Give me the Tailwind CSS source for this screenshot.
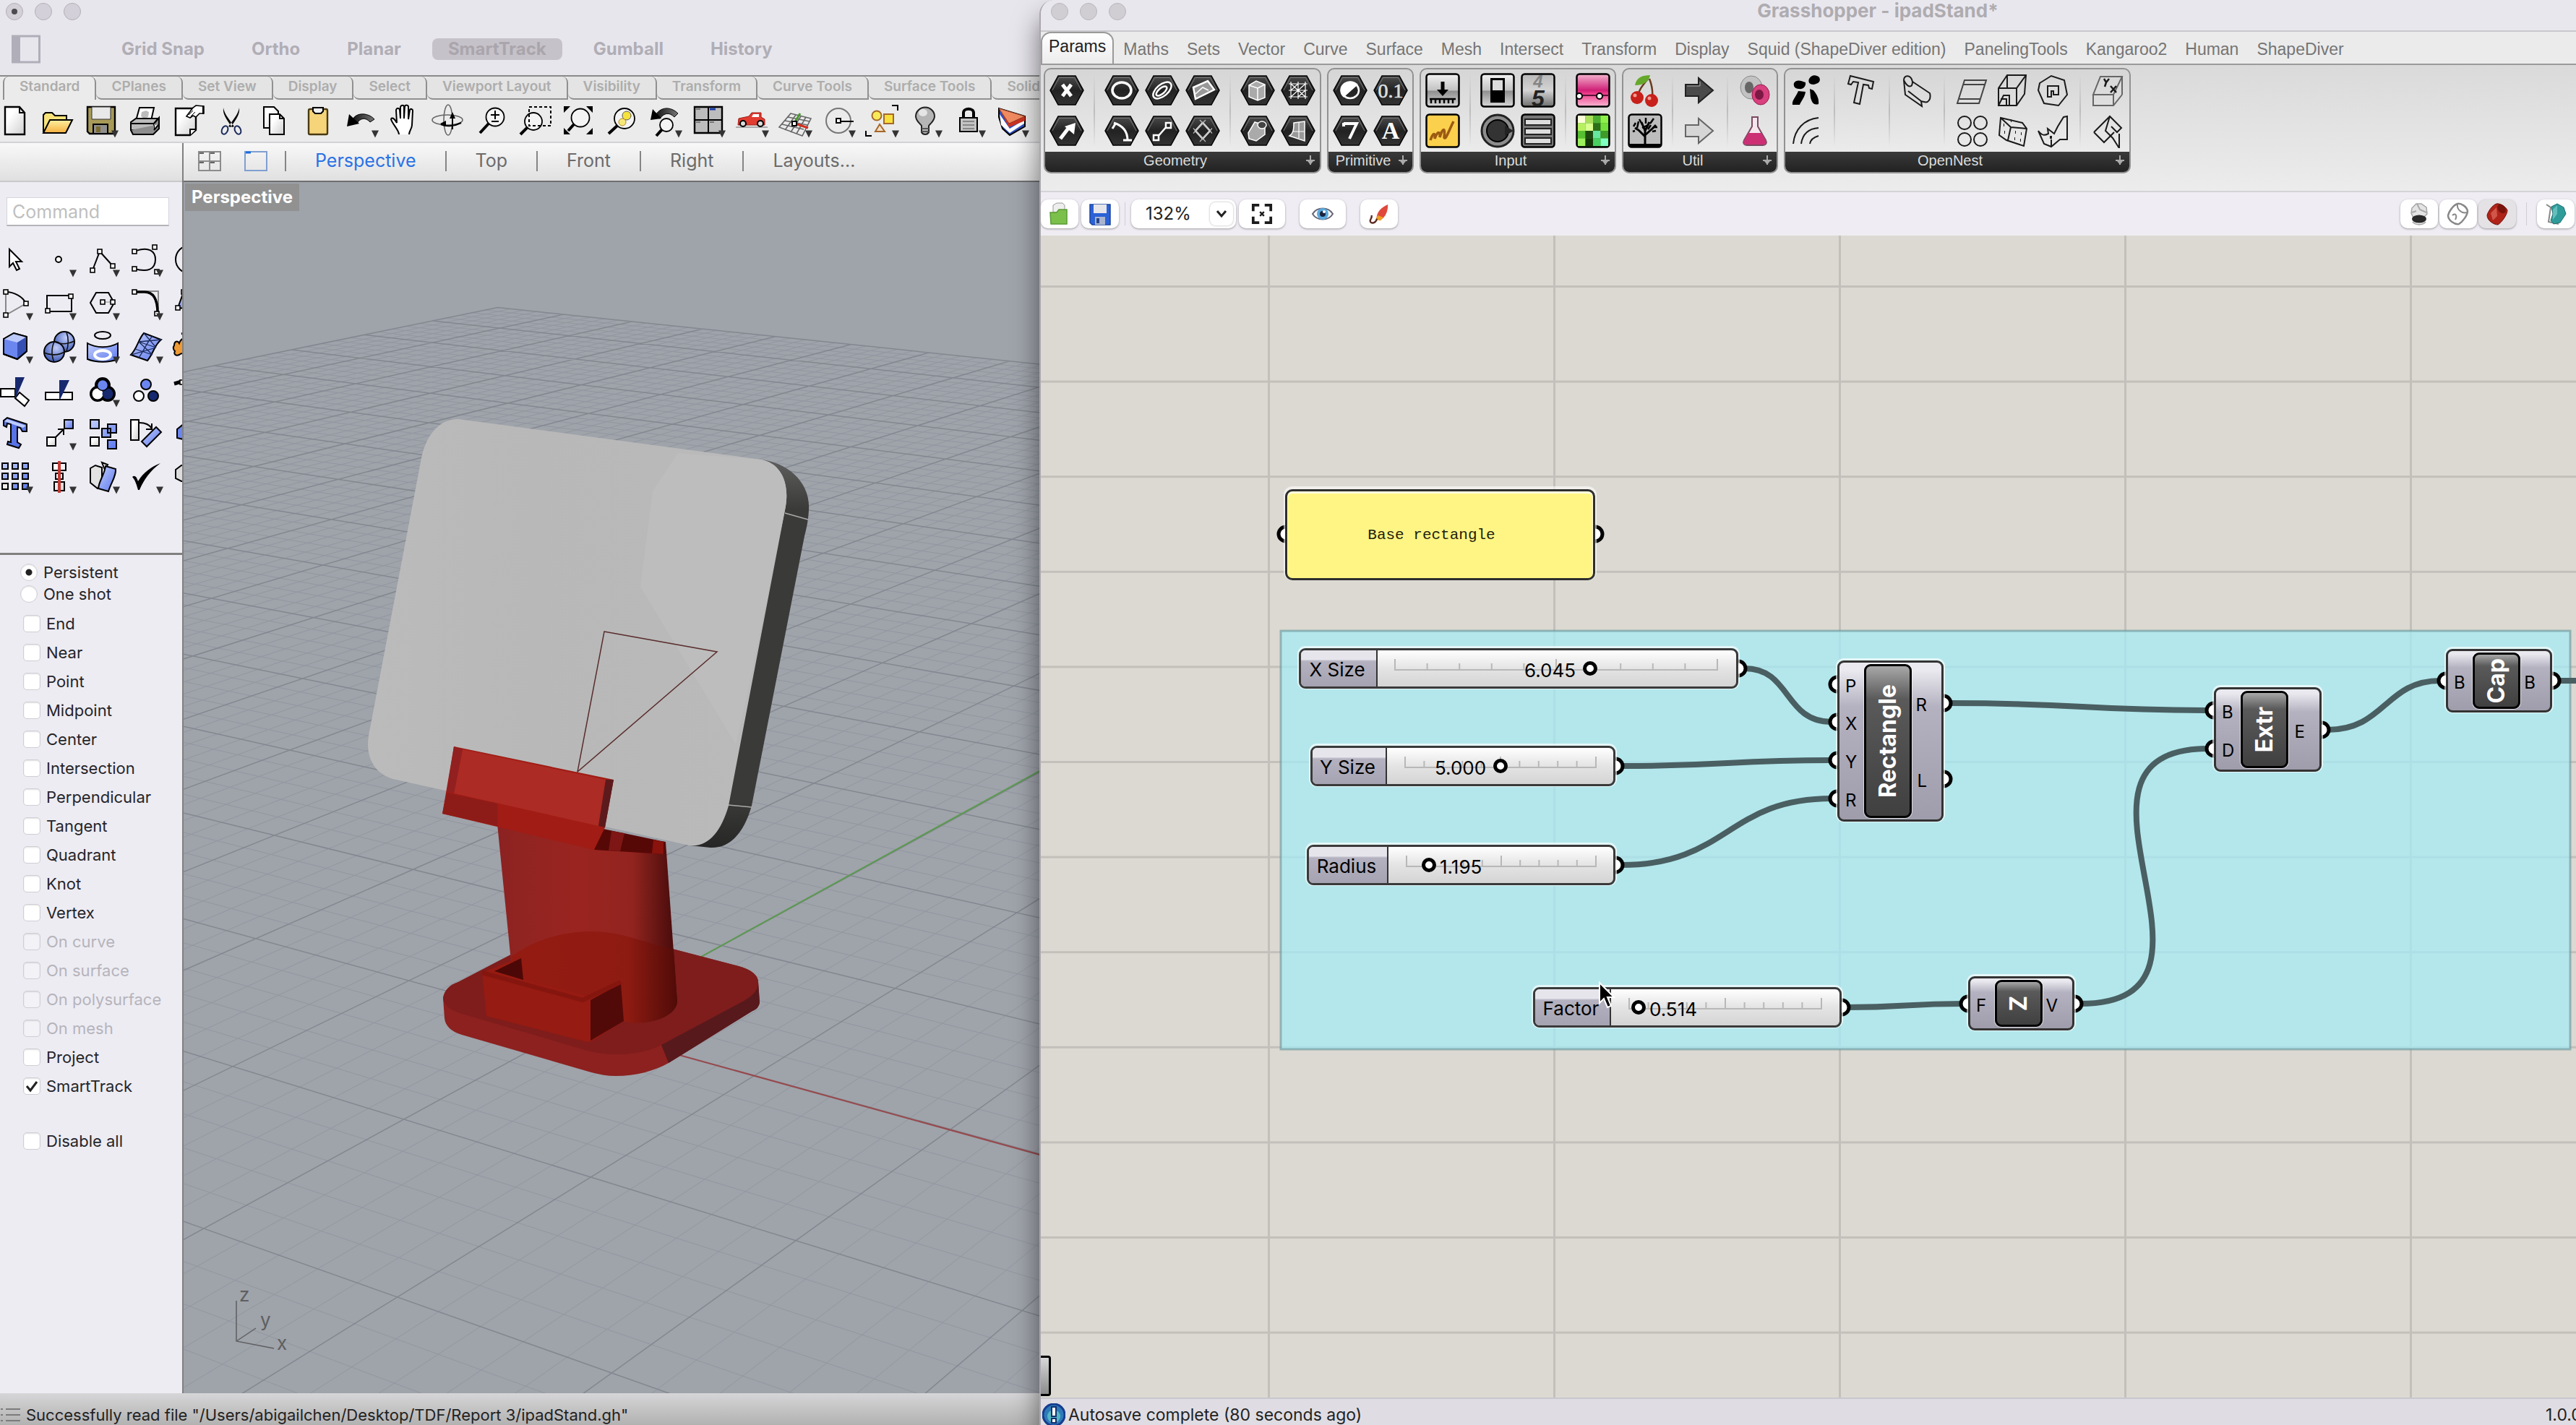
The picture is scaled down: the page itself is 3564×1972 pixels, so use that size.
<!DOCTYPE html>
<html lang="en">
<head>
<meta charset="utf-8">
<title>Rhino and Grasshopper - ipadStand</title>
<script src="https://cdn.jsdelivr.net/npm/@tailwindcss/browser@4"></script>
</head>
<body class="bg-[#e8e6ed]">
<svg class="absolute h-0 w-0" aria-hidden="true">
  <defs>
    <linearGradient id="gPaper" x1="0" y1="0" x2="1" y2="1"><stop offset=".3" stop-color="#fff"/><stop offset="1" stop-color="#cfcfcf"/></linearGradient>
    <linearGradient id="gBlue" x1="0" y1="0" x2="1" y2="1"><stop offset="0" stop-color="#c3cffb"/><stop offset="1" stop-color="#5b78ee"/></linearGradient>
    <radialGradient id="gBall" cx=".6" cy=".3" r=".8"><stop offset="0" stop-color="#c3cffb"/><stop offset="1" stop-color="#2c49a8"/></radialGradient>
    <linearGradient id="gYellow" x1="0" y1="0" x2="0" y2="1"><stop offset="0" stop-color="#fff0a0"/><stop offset="1" stop-color="#f5b040"/></linearGradient>
    <linearGradient id="gDark" x1="0" y1="0" x2="1" y2="0"><stop offset="0" stop-color="#111"/><stop offset="1" stop-color="#777"/></linearGradient>
    <linearGradient id="gMetal" x1="0" y1="0" x2="0" y2="1"><stop offset="0" stop-color="#f2f2f2"/><stop offset=".5" stop-color="#c2c2c2"/><stop offset=".52" stop-color="#8e8e8e"/><stop offset="1" stop-color="#d8d8d8"/></linearGradient>
    <linearGradient id="gDigit" x1="0" y1="0" x2="0" y2="1"><stop offset="0" stop-color="#b8b8b8"/><stop offset=".5" stop-color="#d4d4d4"/><stop offset="1" stop-color="#6e6e6e"/></linearGradient>
    <linearGradient id="gHex" x1="0" y1="0" x2="0" y2="1"><stop offset="0" stop-color="#4c4c4c"/><stop offset=".5" stop-color="#222"/><stop offset="1" stop-color="#333"/></linearGradient>
    <linearGradient id="gPink" x1="0" y1="0" x2="0" y2="1"><stop offset="0" stop-color="#f3b4cf"/><stop offset=".5" stop-color="#d02077"/><stop offset=".6" stop-color="#ee3c8a"/><stop offset="1" stop-color="#f9b7d3"/></linearGradient>
    <linearGradient id="gCol" x1="0" y1="0" x2="1" y2="0"><stop offset="0" stop-color="#8b2122"/><stop offset=".1" stop-color="#8f2421"/><stop offset=".45" stop-color="#9a2420"/><stop offset=".75" stop-color="#92241f"/><stop offset="1" stop-color="#430a0a"/></linearGradient>
    <linearGradient id="gColFoot" x1="0" y1="0" x2="1" y2="0"><stop offset="0" stop-color="#941b12"/><stop offset=".7" stop-color="#8e1b12"/><stop offset="1" stop-color="#500b08"/></linearGradient>
    <linearGradient id="gSide" x1="0" y1="0" x2="0" y2="1"><stop offset="0" stop-color="#5e5e5e"/><stop offset=".13" stop-color="#3a3a38"/><stop offset=".88" stop-color="#3a3a38"/><stop offset="1" stop-color="#262626"/></linearGradient>
    <linearGradient id="gTablet" x1="0" y1="0" x2="1" y2="0"><stop offset="0" stop-color="#bbb"/><stop offset=".4" stop-color="#b8b8b8"/><stop offset="1" stop-color="#bababa"/></linearGradient>
    <symbol id="tri" viewBox="0 0 48 48"><path d="M38 37.500h10l-5 10z" fill="#333"/></symbol>
  </defs>
</svg>

<div class="grid h-screen w-full grid-cols-[1438fr_2126fr] overflow-hidden font-[Inter,'Liberation_Sans',sans-serif]">

  <!-- Rhino window -->
  <section class="flex min-w-0 flex-col overflow-hidden bg-[#e8e6ed]">
    <header class="flex h-[104px] shrink-0 flex-col">
      <div class="flex h-8 items-center gap-4 pl-2">
        <span class="flex size-6 items-center justify-center rounded-full border border-[#b3b0b6] bg-[#d3d0d7]"><i class="size-2 rounded-full bg-[#4d4a50]"></i></span>
        <span class="size-6 rounded-full border border-[#b3b0b6] bg-[#d3d0d9]"></span>
        <span class="size-6 rounded-full border border-[#b3b0b6] bg-[#d3d0d9]"></span>
      </div>
      <nav class="flex items-center gap-[21px] pt-4 pl-4 text-[24px] leading-[30px] font-bold text-[#b0aeb5]">
        <button class="mr-[69px] h-10 w-10" aria-label="Toggle sidebar"><svg viewBox="0 0 40 40" class="size-10"><rect x="1.500" y="2" width="37" height="36" fill="none" stroke="#b0aeb8" stroke-width="3"/><path d="M0 1h12v38H0z" fill="#b0aeb8"/></svg></button>
        <button class="px-[22px]">Grid Snap</button>
        <button class="px-[22px]">Ortho</button>
        <button class="px-[22px]">Planar</button>
        <button class="rounded-lg bg-[#c6c2c9] px-[22px] text-[#aaa5ac]">SmartTrack</button>
        <button class="px-[22px]">Gumball</button>
        <button class="px-[22px]">History</button>
      </nav>
    </header>

    <nav id="rhinoTabs" class="flex h-[34px] shrink-0 overflow-hidden border-t-2 border-[#8a8a8a] bg-[#ebebeb] pl-1 text-[19px] font-semibold text-[#adadad]"></nav>
    <div id="rhinoTools" class="-ml-1 flex h-[60px] shrink-0 items-center overflow-hidden border-b-2 border-[#d3d1d8] bg-[#ebebeb]"></div>

    <div class="flex min-h-0 flex-1">
      <aside class="flex w-[254px] shrink-0 flex-col overflow-hidden border-r-2 border-[#808080] bg-[#edecf3]">
        <div class="h-[54px] shrink-0 border-b-2 border-[#c9c9cb] bg-linear-to-b from-[#f8f8f8] to-[#e0e0e0]"></div>
        <input class="mt-[21px] ml-[9px] h-10 w-[225px] border border-b-2 border-[#d5d4da] border-b-[#b5b4ba] bg-white px-[7px] text-[25px] text-[#333] placeholder:text-[#bfbfbf]" placeholder="Command" aria-label="Command">
        <div id="sideTools" class="mt-[17px] -ml-2 grid w-[300px] grid-cols-5"></div>
        <form id="osnap" class="mt-[75px] flex flex-col border-t-[3px] border-[#808080] pt-[9px] text-[22px] text-[#262529]"></form>
      </aside>

      <main class="flex min-w-0 flex-1 flex-col">
        <nav class="flex h-[54px] shrink-0 items-center overflow-hidden border-b-2 border-[#6f6f6f] bg-linear-to-b from-[#f8f8f8] to-[#e0e0e0] pb-0.5 pl-5 text-[25px] whitespace-nowrap text-[#6b6b6b]">
          <button class="mr-8" aria-label="Four views"><svg viewBox="0 0 32 28" class="h-7 w-8 fill-none stroke-[#8c8c8c] stroke-2"><path d="M1 1h30v26H1zM16 1v26M1 14h30"/><path d="M2 3h6M17 3h6M2 16h6M17 16h6" stroke="#666"/></svg></button>
          <button class="mr-6" aria-label="Single view"><svg viewBox="0 0 32 28" class="h-7 w-8 fill-none stroke-[#7f9fd0] stroke-2"><path d="M1 1h30v26H1z"/><path d="M2 2h7" stroke="#1a6be0" stroke-width="3"/></svg></button>
          <i class="h-7 w-0.5 bg-[#858585]"></i><button class="px-10 text-[#2a72e6]">Perspective</button>
          <i class="h-7 w-0.5 bg-[#858585]"></i><button class="px-10">Top</button>
          <i class="h-7 w-0.5 bg-[#858585]"></i><button class="px-10">Front</button>
          <i class="h-7 w-0.5 bg-[#858585]"></i><button class="px-10">Right</button>
          <i class="h-7 w-0.5 bg-[#858585]"></i><button class="px-10">Layouts...</button>
        </nav>
        <div class="relative min-h-0 flex-1 overflow-hidden bg-[#9fa3aa]">
          <svg viewBox="254 252 1184 1676" preserveAspectRatio="xMinYMin slice" class="absolute inset-0 h-full w-full">
            <g id="ground" fill="none"></g>
            <path d="M795 1420 1500 1033" stroke="#5b9a50" stroke-width="2"/>
            <path d="M795 1420 1500 1615" stroke="#97494c" stroke-width="2"/>
            <!-- tablet -->
            <path d="M1053 636C1090 640 1122 668 1119 706 1118 722 1116 730 1113 742L1040 1115C1030 1150 1012 1174 983 1173L954 1170Z" fill="url(#gSide)"/>
            <path d="M634 580 1053 636C1080 641 1094 668 1086 706L1008 1115C998 1150 980 1173 954 1170L544 1078C520 1071 505 1050 510 1018L583 634C590 600 610 579 634 580Z" fill="url(#gTablet)"/>
            <path d="M938 627 903 680 886 812 1018 1030C1040 940 1060 830 1086 706 1094 668 1080 641 1053 636Z" fill="#bdbdbd"/>
            <path d="M1086 710 1118 719M1008 1114 1040 1117" stroke="#aaa" stroke-width="1.500"/>
            <path d="M836 874 992 902 799 1068Z" fill="none" stroke="#5a2c2c" stroke-width="1.500"/>
            <!-- base plate -->
            <path d="M613 1381C615 1370 622 1363 634 1359L707 1321C740 1300 780 1289 818 1289 850 1289 870 1300 930 1313L1022 1337C1040 1342 1049 1350 1049 1359L1051 1387C1050 1394 1046 1397 1041 1399L925 1471C905 1482 880 1489 852 1489 840 1489 830 1487 818 1484L639 1432C625 1428 616 1420 615 1409Z" fill="#8c211f"/>
            <path d="M613 1381C615 1370 622 1363 634 1359L707 1321C740 1300 780 1289 818 1289 850 1289 870 1300 930 1313L1022 1337C1040 1342 1049 1350 1049 1359 1049 1370 1040 1378 1031 1384L915 1446C895 1456 875 1459 852 1459 838 1459 825 1457 813 1454L636 1402C622 1397 613 1390 613 1381Z" fill="#7e1d1c"/>
            <path d="M1049 1359 1051 1387C1050 1394 1046 1397 1041 1399L925 1471 915 1446 1031 1384C1042 1377 1049 1370 1049 1359Z" fill="#57191c"/>
            <!-- column -->
            <path d="M688 1140 921 1165 937 1387C934 1405 908 1416 876 1416L710 1360Z" fill="url(#gCol)"/>
            <path d="M707 1324C740 1300 780 1289 818 1289 860 1289 890 1304 932 1314L937 1387C934 1405 908 1416 876 1416L720 1380Z" fill="url(#gColFoot)"/>
            <path d="M825 1145 920 1165 919 1182 822 1176Z" fill="#560806"/>
            <path d="M846 1150 864 1153 858 1178 842 1177Z" fill="#7d1614"/>
            <path d="M904 1162 918 1165 918 1182 902 1181Z" fill="#8a130d"/>
            <!-- cable box -->
            <path d="M667 1346 721 1324 724 1354 811 1378 859 1359 863 1413 820 1440C816 1442 812 1442 808 1441L673 1406Z" fill="#961b12"/>
            <path d="M684 1344 721 1326 724 1356Z" fill="#4c0806"/>
            <path d="M817 1384 859 1361 863 1413 817 1440Z" fill="#520a08"/>
            <path d="M667 1346 806 1384 859 1359" fill="none" stroke="#85160f" stroke-width="6"/>
            <!-- tablet ledge -->
            <path d="M628 1033 849 1079 837 1145 822 1176 612 1126Z" fill="#a01c14"/>
            <path d="M640 1037 838 1079 828 1143 628 1098Z" fill="#ac2b24"/>
            <path d="M628 1033 640 1037 628 1098 618 1096Z" fill="#922020"/>
            <path d="M838 1079 849 1079 837 1145 828 1143Z" fill="#5d1a1c"/>
            <path d="M618 1097 688 1112 688 1143 612 1126Z" fill="#8d1c18"/>
            <!-- axis glyph -->
            <g stroke="#5e5f60" stroke-width="1.500" fill="none"><path d="M327 1800v56l52 10M327 1856l27-18"/></g>
            <g fill="#5e5f60" font-family="Inter, sans-serif" font-size="26"><text x="331" y="1801">z</text><text x="360" y="1836">y</text><text x="383" y="1868">x</text></g>
          </svg>
          <span class="absolute top-0.5 left-0.5 bg-[#919191] px-[9px] text-[24px] leading-[38px] font-bold text-white">Perspective</span>
        </div>
      </main>
    </div>

    <footer class="flex h-11 shrink-0 items-center gap-2 overflow-hidden bg-linear-to-b from-[#d6d5d7] to-[#b2b2b2] pt-4 text-[22px] whitespace-nowrap text-[#222]">
      <svg viewBox="0 0 28 22" class="h-[22px] w-7 shrink-0 stroke-[#7b7b7b] stroke-2"><path d="M1 3h3M8 3h20M1 11h3M8 11h20M1 19h3M8 19h20"/></svg>
      <span>Successfully read file "/Users/abigailchen/Desktop/TDF/Report 3/ipadStand.gh"</span>
    </footer>
  </section>

  <!-- Grasshopper window -->
  <section class="relative z-10 flex min-w-0 flex-col overflow-hidden rounded-tl-[20px] border-l-2 border-[#aaa8ad] bg-[#efecf3] shadow-[0_24px_36px_rgba(0,0,0,0.5)]">
    <header class="relative flex h-11 shrink-0 items-start justify-center border-b-2 border-[#c9c8cb] bg-[#e9e7ee]">
      <div class="absolute top-1 left-3.5 flex gap-4"><i class="size-6 rounded-full border border-[#b9b7bb] bg-[#d0ced3]"></i><i class="size-6 rounded-full border border-[#b9b7bb] bg-[#d0ced3]"></i><i class="size-6 rounded-full border border-[#b9b7bb] bg-[#d0ced3]"></i></div>
      <h1 class="pl-48 text-[26px] leading-[30px] font-bold text-[#aeacb0]">Grasshopper - ipadStand*</h1>
    </header>
    <nav id="ghTabs" class="relative flex h-11 shrink-0 items-stretch gap-px overflow-hidden bg-[#ebebeb] font-['Liberation_Sans',Arial,sans-serif] text-[23px] whitespace-nowrap text-[#757575]"></nav>
    <div class="h-[178px] shrink-0 overflow-hidden border-t-2 border-b-2 border-t-[#9a9a9a] border-b-[#d4d3d8] bg-linear-to-b from-[#dadada] to-[#ececec] pt-1">
      <div id="ribbon" class="flex gap-2 pl-1 font-['Liberation_Sans',Arial,sans-serif]"></div>
    </div>

    <div class="flex h-[60px] shrink-0 items-center overflow-hidden bg-[#efecf3]">
      <button class="mr-1 flex h-10 w-[52px] items-center justify-center rounded-[10px] bg-white shadow-[0_1px_3px_rgba(0,0,0,0.35)]" aria-label="Open"><svg viewBox="0 0 30 32" class="h-8 w-[30px]"><path d="M6 14V4l5-3h8l3 3v10z" fill="#eee" stroke="#999"/><path d="M2 14h9l3-4h11v20H3z" fill="#7cc04c" stroke="#5a9a35" stroke-width="1.500"/></svg></button>
      <button class="mr-2 flex h-10 w-[52px] items-center justify-center rounded-[10px] bg-white shadow-[0_1px_3px_rgba(0,0,0,0.35)]" aria-label="Save"><svg viewBox="0 0 30 32" class="h-8 w-[30px]"><path d="M1 3h28v28H4l-3-3z" fill="#2b62d6" stroke="#1c449e" stroke-width="1.500"/><path d="M6 3h18v12H6z" fill="#e6e6ea"/><path d="M8 20h14v11H8z" fill="#a9b4cf"/><path d="M10 22h4v7h-4z" fill="#24458e"/></svg></button>
      <i class="mr-2 h-8 w-px bg-[#d0ced4]"></i>
      <div class="relative mr-1 h-10 w-[145px]">
        <select class="h-10 w-full appearance-none rounded-[10px] bg-white pl-[20px] text-[24px] text-[#222] shadow-[0_1px_3px_rgba(0,0,0,0.35)]" aria-label="Zoom"><option>132%</option></select>
        <span class="pointer-events-none absolute top-1 right-1 flex h-8 w-8 items-center justify-center rounded-lg bg-white shadow-[0_0_3px_rgba(0,0,0,0.3)]"><svg viewBox="0 0 16 12" class="h-3 w-4 fill-none stroke-[#222] stroke-3"><path d="M2 2l6 7 6-7"/></svg></span>
      </div>
      <button class="mr-5 flex h-10 w-16 items-center justify-center rounded-[10px] bg-white shadow-[0_1px_3px_rgba(0,0,0,0.35)]" aria-label="Zoom extents"><svg viewBox="0 0 32 32" class="size-[30px] fill-none stroke-[#1c1c1c] stroke-[4]"><path d="M12 3H3v9M20 3h9v9M12 29H3v-9M20 29h9v-9"/><path d="M13 13l6 6M19 13l-6 6" stroke-width="2.500"/></svg></button>
      <button class="mr-5 flex h-10 w-16 items-center justify-center rounded-[10px] bg-white shadow-[0_1px_3px_rgba(0,0,0,0.35)]" aria-label="Preview"><svg viewBox="0 0 32 24" class="h-6 w-8"><path d="M2 12C8 2 24 2 30 12 24 22 8 22 2 12z" fill="#fff" stroke="#667" stroke-width="2"/><circle cx="16" cy="12" r="8" fill="#5aa9dc"/><circle cx="16" cy="12" r="4" fill="#1a2440"/><circle cx="18" cy="9" r="2" fill="#fff"/></svg></button>
      <button class="flex h-10 w-[52px] items-center justify-center rounded-[10px] bg-white shadow-[0_1px_3px_rgba(0,0,0,0.35)]" aria-label="Sketch"><svg viewBox="0 0 32 32" class="size-[30px]"><path d="M29 2C18 7 13 13 12 23l6 2C26 20 29 12 29 2z" fill="#e0483c"/><path d="M14 18l8 3-4 5-7-2z" fill="#f0a020"/><path d="M13 23c-2 7-9 8-10 4-1-3 3-4 2-9" fill="none" stroke="#5a2a20" stroke-width="2.500"/></svg></button>
      <div class="ml-auto flex shrink-0 items-center gap-0.5 pr-0.5">
        <button class="flex h-10 w-[52px] items-center justify-center rounded-[10px] bg-white shadow-[0_1px_3px_rgba(0,0,0,0.35)]" aria-label="No preview"><svg viewBox="0 0 32 32" class="h-8 w-8"><path d="M5 15l1-7 6-6h7l7 5 1 9-5 5H8z" fill="#e4e4e4" stroke="#a5a5a5" stroke-width="1.500"/><path d="M13 2l4 8 9 4M12 12l-6 2" fill="none" stroke="#aaa" stroke-width="2"/><ellipse cx="16" cy="23" rx="10" ry="5.500" fill="#2a2a2a"/><path d="M7 27c4 5 14 5 18 0" fill="none" stroke="#aaa" stroke-width="2"/></svg></button>
        <button class="flex h-10 w-[52px] items-center justify-center rounded-[10px] bg-white shadow-[0_1px_3px_rgba(0,0,0,0.35)]" aria-label="Wireframe preview"><svg viewBox="0 0 32 32" class="h-8 w-8 fill-none stroke-[#888] stroke-[2.5]"><path d="M2 18C3 13 9 4 15 2c5-1 13 4 14 10 0 6-7 15-12 18C11 31 2 25 2 18z"/><path d="M15 3c-1 6 5 13 13 11M8 18c4-4 7 0 4 6" stroke-width="2"/></svg></button>
        <button class="flex h-10 w-[52px] items-center justify-center rounded-[10px] bg-[#e4e2e4] shadow-[0_1px_3px_rgba(0,0,0,0.35)]" aria-label="Shaded preview"><svg viewBox="0 0 32 32" class="h-8 w-8"><path d="M2 18C3 13 9 4 15 2c5-1 13 4 15 9 0 6-8 17-13 20C11 31 2 25 2 18z" fill="#b02318" stroke="#6d120c"/><path d="M7 15l8-8 1 12-6 6z" fill="#e8786c" opacity=".6"/><ellipse cx="22" cy="9" rx="5" ry="7" transform="rotate(-40 22 9)" fill="#7a120c"/></svg></button>
        <i class="mx-3 h-8 w-px bg-[#d0ced4]"></i>
        <button class="flex h-10 w-[52px] items-center justify-center rounded-[10px] bg-white shadow-[0_1px_3px_rgba(0,0,0,0.35)]" aria-label="Selected preview"><svg viewBox="0 0 32 32" class="h-8 w-8"><path d="M3 3l6 4-3 20 14 3" fill="none" stroke="#888" stroke-width="2"/><path d="M10 6l8-4 9 5 3 9-8 12-9 2-4-5 3-9z" fill="#2f9c9a" stroke="#1d6f70"/><path d="M12 10l6-6v12l-6 8z" fill="#8ad6d2" opacity=".6"/></svg></button>
      </div>
    </div>

    <div class="relative min-h-0 flex-1 overflow-hidden bg-[#dcd9d2]">
      <!-- The world layer holds everything that pans with the canvas -->
      <div class="absolute -top-[326px] -left-[1440px] h-[2400px] w-[3700px]">
        <svg class="absolute inset-0 h-full w-full">
          <defs><pattern id="mesh" x="1754" y="658.200" width="395" height="131.600" patternUnits="userSpaceOnUse"><path d="M0 1.500h395M1.500 0v131.600" stroke="#c3c0bb" stroke-width="3"/></pattern></defs>
          <rect width="3700" height="2400" fill="url(#mesh)"/>
          <rect x="1772" y="873" width="1784" height="579" fill="#a5ebf4" fill-opacity=".75" stroke="#6f9a9e" stroke-opacity=".65" stroke-width="3"/>
          <g fill="none" stroke="#4a5f62" stroke-width="8">
            <path d="M2414 925C2478 925 2468 999 2534 999"/>
            <path d="M2244 1060C2390 1060 2390 1052 2534 1052"/>
            <path d="M2244 1197C2390 1197 2390 1105 2534 1105"/>
            <path d="M2698 973C2880 973 2880 983 3056 983"/>
            <path d="M3220 1010C3300 1010 3300 942 3376 942"/>
            <path d="M2556 1394C2636 1394 2636 1389 2716 1389"/>
            <path d="M2878 1389C3122 1389 2812 1036 3056 1036"/>
            <path d="M3540 942h160"/>
          </g>
          <g id="ports" fill="#fff" stroke="#000" stroke-width="5"></g>
        </svg>
        <div id="nodes"></div>
        <svg viewBox="0 0 24 38" class="absolute top-[1358px] left-[2211px] h-[38px] w-6"><path d="M2 2v28l6-6 5 12 5-2-5-12h9z" fill="#000" stroke="#fff" stroke-width="2"/></svg>
      </div>
      <div class="absolute bottom-0.5 left-0 h-14 w-3.5 rounded-r-sm border-3 border-l-0 border-black bg-linear-to-b from-[#d8d8d8] to-[#8c8c8c]"></div>
    </div>

    <footer class="flex h-[38px] shrink-0 items-center gap-1 overflow-hidden border-t-2 border-[#c9c7ce] bg-[#dfdde3] pt-2 pl-0.5 text-[23px] whitespace-nowrap text-[#222]">
      <svg viewBox="0 0 32 32" class="size-8 shrink-0"><circle cx="16" cy="16" r="15" fill="#2e7ab8" stroke="#163c8e" stroke-width="3"/><circle cx="16" cy="18" r="9" fill="#55b6c4"/><path d="M13 5h6v13h-6zM13 21h6v6h-6z" fill="#fff" stroke="#12306e" stroke-width="2"/></svg>
      <span>Autosave complete (80 seconds ago)</span>
      <span class="ml-auto w-[42px] overflow-hidden">1.0.0007</span>
    </footer>
  </section>
</div>

<script>
const $ = id => document.getElementById(id);
const sq = (x, y) => `<rect x="${x - 3}" y="${y - 3}" width="6" height="6" fill="#fff" stroke="#000" stroke-width="1.600"/>`;
const TRI = '<use href="#tri"/>';
const glass = (x, y, r, hx, hy) => `<path d="M${x - r * .7} ${y + r * .7}L${hx} ${hy}" stroke="#000" stroke-width="4"/><circle cx="${x}" cy="${y}" r="${r}" fill="#f4f4f4" stroke="#000" stroke-width="1.800"/>`;

/* Rhino tabs */
const tabs = ['Standard', 'CPlanes', 'Set View', 'Display', 'Select', 'Viewport Layout', 'Visibility', 'Transform', 'Curve Tools', 'Surface Tools', 'Solid Tools'];
$('rhinoTabs').innerHTML = tabs.map((t, i) => i === 0
  ? `<button class="shrink-0 rounded-t-lg border-x-2 border-[#909090] bg-[#ebebeb] px-[21px] pb-1">${t}</button>`
  : `<button class="shrink-0 rounded-tr-lg rounded-bl-lg border-r-2 border-b-2 border-[#909090] bg-[#e4e4e4] px-[21px] pb-0.5">${t}</button>`).join('');

/* Rhino toolbar */
const tools = [
 ['New', '<path d="M11 5h20l7 8v30H11z" fill="url(#gPaper)" stroke="#000" stroke-width="2.400"/><path d="M31 5v8h7" fill="none" stroke="#000" stroke-width="2"/>'],
 ['Open', '<path d="M4 40V16l3-3h9l4 4h16v5" fill="#f7e27a" stroke="#000" stroke-width="2"/><path d="M4 41l9-18h31l-9 18z" fill="url(#gYellow)" stroke="#000" stroke-width="2"/>'],
 ['Save', '<path d="M5 5h38v37H8l-3-3z" fill="#a89a58" stroke="#000" stroke-width="2.400"/><path d="M11 5h26v17H11z" fill="#e8e8e8" stroke="#333"/><path d="M13 29h20v13H13z" fill="#8f8f8f" stroke="#000" stroke-width="2"/><path d="M17 32h6v8h-6z" fill="#7a6a30"/>' + TRI],
 ['Print', '<path d="M12 24l5-18h20l-4 18z" fill="#fff" stroke="#000" stroke-width="2"/><path d="M20 12l6-2 4 2-1 7-6 2-4-3z" fill="#bbb"/><path d="M5 26l7-5h31l-6 7H5zM5 28h32v9H5z" fill="#bbb" stroke="#000" stroke-width="2"/><path d="M37 28l7-8v9l-7 8M5 37l3 6h28l8-8v-6" fill="#8d8d8d" stroke="#000" stroke-width="2"/>'],
 ['Properties', '<path d="M7 7h28v30l-8 7H7z" fill="url(#gPaper)" stroke="#000" stroke-width="2.400"/><path d="M27 44v-8h8" fill="#fff" stroke="#000" stroke-width="2"/><path d="M46 4v10h-6l-5 5-4-2-4 3-5-2 9-12 4-3z" fill="#fff" stroke="#000" stroke-width="1.600"/><path d="M25 16l6-6M28 18l6-6" stroke="#000"/><path d="M44 3h2v12h-2z"/>'],
 ['Cut', '<path d="M13 6c1 7 6 14 15 26l-3 1C16 21 12 14 13 6zM35 6c-1 7-6 14-15 26l3 1c9-12 13-19 12-27z"/><ellipse cx="15" cy="37" rx="4" ry="6" transform="rotate(25 15 37)" fill="none" stroke="#1b2a5c" stroke-width="2"/><ellipse cx="33" cy="37" rx="4" ry="6" transform="rotate(-25 33 37)" fill="none" stroke="#1b2a5c" stroke-width="2"/>'],
 ['Copy', '<path d="M9 5h14l6 6v23H9z" fill="url(#gPaper)" stroke="#000" stroke-width="2"/><path d="M17 15h14l6 6v22H17z" fill="url(#gPaper)" stroke="#000" stroke-width="2"/><path d="M31 15v6h6" fill="none" stroke="#000" stroke-width="2"/>'],
 ['Paste', '<rect x="11" y="8" width="26" height="35" rx="2" fill="#f6d47a" stroke="#4a3a10" stroke-width="2.400"/><path d="M17 6h14v5l-3 3h-8l-3-3z" fill="#eee" stroke="#000" stroke-width="2"/>'],
 ['Undo', '<path d="M11 25c3-13 22-13 31-3l-6 4c-6-7-14-6-18 2z" fill="url(#gDark)" stroke="#000"/><path d="M4 32l3-17 14 13z"/>' + TRI],
 ['Pan', '<path d="M16 43c0-6-9-14-11-21 1-3 4-2 8 5L12 9c1-3 4-3 5 0l1 12V5c1-3 5-3 5 0v16l1-17c1-2 5-2 5 1v17l2-13c1-2 4-1 4 1l-1 20c0 5-4 8-4 13" fill="#fff" stroke="#000" stroke-width="2"/>'],
 ['Rotate view', '<ellipse cx="24" cy="23" rx="6" ry="21" fill="none" stroke="#666" stroke-width="1.600"/><ellipse cx="23" cy="23" rx="21" ry="7" fill="none" stroke="#666" stroke-width="1.600"/><path d="M30 14v22M14 29c8 4 20 2 28-2" stroke="#000" stroke-width="2" fill="none"/><path d="M30 12l4 9h-8zM13 28l8-4v8z"/>'],
 ['Zoom dynamic', glass(29, 19, 12.500, 8, 41) + '<path d="M29 10v12M23 16h12M24 25h10" stroke="#000" stroke-width="2"/>'],
 ['Zoom window', glass(22, 25, 12, 4, 43) + '<path d="M16 5h30v26H16z" fill="none" stroke="#000" stroke-width="2" stroke-dasharray="4 3"/>'],
 ['Zoom extents', glass(27, 20, 12.500, 10, 38) + '<path d="M4 4h9l-9 9zM44 4v9l-9-9zM4 43v-9l9 9zM44 43h-9l9-9z"/>'],
 ['Zoom selected', glass(28, 21, 14, 6, 42) + '<circle cx="31" cy="17" r="6" fill="#f6e23c" stroke="#555"/><circle cx="25" cy="26" r="5" fill="#f6e878" stroke="#b58a20"/>'],
 ['Undo view', '<path d="M10 18C17 4 32 4 42 14l-5 5c-7-7-14-6-20 2z" fill="url(#gDark)" stroke="#000"/><path d="M4 23l3-15 12 13z"/>' + glass(26, 30, 9, 12, 45) + TRI],
 ['Four views', '<path d="M5 5h38v36H5z" fill="#bdbdbd" stroke="#000" stroke-width="2.400"/><path d="M24 5v36M5 23h38" stroke="#000" stroke-width="2"/><path d="M7 8h6M7 26h6M26 26h6" stroke="#777" stroke-width="2"/><path d="M26 8h8" stroke="#1c3ca8" stroke-width="3"/>' + TRI],
 ['Car', '<path d="M2 33h44" stroke="#aaa" stroke-width="2"/><path d="M6 21l14-3 4-5h13v6l5 3v8H5z" fill="#e23b30" stroke="#9c1c14"/><path d="M24 19l2-4h8v4z" fill="#fff"/><circle cx="12" cy="28" r="4" fill="#ddd" stroke="#000" stroke-width="2"/><circle cx="36" cy="28" r="4" fill="#ddd" stroke="#000" stroke-width="2"/>' + TRI],
 ['CPlane', '<path d="M18 14l28 7-12 24L2 33zM14 19l30 6M10 24l31 6M6 29l30 7M25 16L10 37M32 18L18 40M39 19L26 42" fill="none" stroke="#666" stroke-width="1.600"/><path d="M23 27l8-13" stroke="#4a9a30" stroke-width="3"/><path d="M24 28l18 6" stroke="#d03020" stroke-width="3"/><path d="M20 25h6v6h-6z" fill="#fff" stroke="#000" stroke-width="2"/>' + TRI],
 ['Circle', '<circle cx="24" cy="24" r="17" fill="none" stroke="#777" stroke-width="2"/><path d="M27 25h18" stroke="#000" stroke-width="2"/><path d="M21 21h6v6h-6z" fill="#fff" stroke="#000" stroke-width="2"/>' + TRI],
 ['Select', '<circle cx="17" cy="17" r="6.500" fill="#f8ea58" stroke="#a5672a" stroke-width="2"/><path d="M27 15h13v13H27z" fill="#f8e03c" stroke="#a5672a" stroke-width="2"/><path d="M21 29l-6 10h13z" fill="#f3dfc8" stroke="#a5672a" stroke-width="2"/><path d="M38 3h8v7M2 38v7h8" fill="none" stroke="#000" stroke-width="2"/>' + TRI],
 ['Light', '<path d="M19 40v-9c-3-4-8-7-8-13a13 12.500 0 0 1 26 0c0 6-5 9-8 13v9c-2 4-8 4-10 0z" fill="#b5b5b5" stroke="#222" stroke-width="2"/><path d="M19 35h10M19 39h10" stroke="#555" stroke-width="2"/><ellipse cx="21" cy="13" rx="6" ry="5" fill="#e5e5e5"/>' + TRI],
 ['Lock', '<path d="M17 20v-7c0-7 14-7 14 0v7" fill="none" stroke="#000" stroke-width="4"/><path d="M12 20h24v19H12z" fill="#c4c4c4" stroke="#000" stroke-width="2"/><path d="M16 25h16M16 30h16M16 35h16" stroke="#888" stroke-width="2"/>' + TRI],
 ['Layers', '<path d="M6 7l0 12 5 16 10 9 21-12V18z" fill="#2c4fc0" stroke="#000" stroke-width="2"/><path d="M7 15l14 20 20-12v5L21 41 9 30z" fill="#fff"/><path d="M6 7l36 11v6L20 33z" fill="#cc3322"/><path d="M6 7l36 11-22 10z" fill="#f08a60" stroke="#8c3a20"/>' + TRI]
];
$('rhinoTools').innerHTML = tools.map(([n, s], i) => `<button aria-label="${n}" class="${i === 0 ? 'h-12 w-[54px] shrink-0' : 'h-12 w-[60px] shrink-0'}"><svg viewBox="0 0 48 48" class="ml-auto mr-1.5 size-12">${s}</svg></button>`).join('');

/* Side toolbox */
const side = [
 ['Pick', '<path d="M15 9v24l5-5 5 10 4-2-5-10h8z" fill="#fff" stroke="#000" stroke-width="2"/>'],
 ['Point', '<circle cx="23" cy="23" r="4" fill="#fff" stroke="#000" stroke-width="2"/>' + TRI],
 ['Polyline', '<path d="M10 38L20 12l18 20" fill="none" stroke="#000" stroke-width="2"/>' + sq(20, 12) + sq(10, 38) + sq(38, 32) + TRI],
 ['Curve', '<path d="M8 12C28 4 37 12 37 23 37 37 26 41 8 36" fill="none" stroke="#000" stroke-width="2"/>' + sq(8, 12) + sq(8, 36) + sq(36, 6) + sq(39, 40) + TRI],
 ['Circle', '<circle cx="24" cy="23" r="19" fill="none" stroke="#000" stroke-width="2"/>'],
 ['Arc', '<path d="M10 8v32l28-16" fill="none" stroke="#888" stroke-width="2"/><path d="M10 8c12 0 24 7 28 16" fill="none" stroke="#000" stroke-width="2"/>' + sq(10, 8) + sq(38, 24) + sq(10, 40) + TRI],
 ['Rectangle', '<path d="M7 13h34v22H7z" fill="none" stroke="#000" stroke-width="2"/>' + sq(8, 34) + sq(40, 14) + TRI],
 ['Polygon', '<path d="M7 23l8-14h17l8 14-8 14H15z" fill="none" stroke="#000" stroke-width="2"/><path d="M24 22h14" stroke="#888"/>' + sq(24, 22) + sq(38, 22) + TRI],
 ['Fillet', '<path d="M8 7h33v31" fill="none" stroke="#888" stroke-width="2"/><path d="M8 8h14c12 0 18 10 18 29" fill="none" stroke="#000" stroke-width="3.500"/>' + sq(8, 8) + sq(39, 38) + TRI],
 ['Surface', '<path d="M8 30L16 8h20v24z" fill="url(#gBlue)" stroke="#000" stroke-width="2"/>' + sq(8, 30) + sq(16, 8)],
 ['Box', '<path d="M7 13l14-8 18 5v20L26 41 7 34z" fill="#6c86f0" stroke="#000" stroke-width="2"/><path d="M7 13l14-8 18 5-13 8z" fill="#bccafb"/><path d="M39 10v20L26 41V18z" fill="#354fb2"/><path d="M7 13l14-8 18 5v20L26 41 7 34z" fill="none" stroke="#000" stroke-width="2"/>' + TRI],
 ['Spheres', '<circle cx="31" cy="17" r="14" fill="url(#gBall)" stroke="#000" stroke-width="2"/><circle cx="17" cy="31" r="14" fill="url(#gBall)" stroke="#000" stroke-width="2"/><path d="M3 32c8 4 20 4 28-1M17 17c-4 8-4 20 0 28M20 18c8 3 16 2 25-2M34 4c3 7 3 18 0 26" fill="none" stroke="#111" stroke-width="1.600"/>' + TRI],
 ['Project', '<ellipse cx="24" cy="8" rx="11" ry="5" fill="none" stroke="#000" stroke-width="2"/><path d="M3 19c12 7 30 7 42 0v22c-12 5-30 5-42 0z" fill="url(#gBlue)" stroke="#000" stroke-width="2"/><ellipse cx="24" cy="35" rx="11" ry="6" fill="none" stroke="#fff" stroke-width="4"/>' + TRI],
 ['Mesh', '<path d="M21 5l24 9C35 22 35 32 26 43L3 35C12 26 13 14 21 5z" fill="url(#gBlue)" stroke="#000" stroke-width="2"/><path d="M33 9C25 18 22 28 14 39M14 17l24 8M9 27l24 8M21 5l17 20M45 14L14 17M38 25L3 35M14 17l19 18" fill="none" stroke="#1b2a5c" stroke-width="1.300"/>' + TRI],
 ['Plugin', '<path d="M3 22c0-6 5-7 7-3 2-6 6-8 10-6h10v24H18c-1-4-5-5-8-2-5 2-8-1-6-5-2-2-3-5-1-8z" fill="#ee9a35" stroke="#000" stroke-width="2"/><path d="M13 6l8-2" stroke="#000" stroke-width="3"/>'],
 ['Trim', '<path d="M3 22h20v11H3z" fill="#fff" stroke="#000" stroke-width="2"/><path d="M29 27l13 11-6 8-13-11z" fill="#fff" stroke="#000" stroke-width="2"/><path d="M23 6h13L24 34h-1z" fill="#16286e"/>'],
 ['Split', '<path d="M5 27h37v10H5z" fill="#fff" stroke="#000" stroke-width="2"/><path d="M24 10h14L25 37h-1z" fill="#16286e"/>'],
 ['Group', '<g stroke="#000" stroke-width="8"><circle cx="24" cy="17" r="7"/><circle cx="17" cy="29" r="7"/><circle cx="31" cy="29" r="7"/></g><circle cx="17" cy="29" r="7.500" fill="#fff"/><circle cx="31" cy="29" r="7.500" fill="#16286e"/><circle cx="24" cy="17" r="7.500" fill="#6c86f0" stroke="#000" stroke-width="1.500"/>' + TRI],
 ['Ungroup', '<circle cx="24" cy="16" r="7" fill="#6c86f0" stroke="#000" stroke-width="2"/><circle cx="14" cy="32" r="7" fill="#fff" stroke="#000" stroke-width="2"/><circle cx="34" cy="32" r="7" fill="#16286e" stroke="#000" stroke-width="2"/>'],
 ['Join', '<path d="M3 15l10-3" stroke="#000" stroke-width="5"/>' + sq(14, 13)],
 ['Text', '<path d="M7 6l5-4 27 9v10h-6l-3-5-4-1v21l5 3-3 5-16-5 1-4 4 1V11l-5-1-1 5-4-2z" fill="#5873e6" stroke="#000" stroke-width="2"/><path d="M8 7l4-3 26 9-4 3z" fill="#bccafb"/>'],
 ['Move', '<path d="M7 29h12v12H7z" fill="url(#gPaper)" stroke="#000" stroke-width="2"/><path d="M31 5h12v12H31z" fill="url(#gBlue)" stroke="#000" stroke-width="2"/><path d="M18 30l12-12M22 18h8v8" fill="none" stroke="#000" stroke-width="2"/>' + TRI],
 ['Copy', '<g fill="url(#gBlue)" stroke="#000" stroke-width="2"><path d="M7 5h12v12H7zM31 11h12v12H31zM23 17h12v12H23zM31 33h12v12H31z"/></g><path d="M7 29h12v12H7z" fill="url(#gPaper)" stroke="#000" stroke-width="2"/>'],
 ['Rotate', '<path d="M3 5h11v28H3z" fill="url(#gPaper)" stroke="#000" stroke-width="2"/><path d="M38 15l7 7-20 20-7-7z" fill="url(#gBlue)" stroke="#000" stroke-width="2"/><path d="M15 9c8 0 14 3 17 8M32 10v8h-8" fill="none" stroke="#000" stroke-width="2"/>'],
 ['Scale', '<path d="M7 18l10-8h20v24H24L7 30z" fill="#6c86f0" stroke="#000" stroke-width="2"/>'],
 ['Array', '<g fill="url(#gBlue)" stroke="#000" stroke-width="2"><path d="M5 5h8v8H5zM19 5h8v8h-8zM33 5h8v8h-8zM5 19h8v8H5zM19 19h8v8h-8zM33 19h8v8h-8zM19 33h8v8h-8zM33 33h8v8h-8z"/><path d="M5 33h8v8H5z" fill="#eee"/></g>' + TRI],
 ['Align', '<g fill="url(#gPaper)" stroke="#000" stroke-width="2"><path d="M15 5h18v10H15zM19 19h10v8H19zM17 31h14v12H17z"/></g><path d="M24 2v44" stroke="#c43a34" stroke-width="4"/>' + TRI],
 ['Bend', '<path d="M7 12l7-4 9 3v26l-6 3-10-8z" fill="#e2e2e2" stroke="#000" stroke-width="2"/><path d="M23 4l8 3-4 7z" fill="#fff" stroke="#000" stroke-width="2"/><path d="M28 9l14 4c1 10-6 18-10 31l-14-4c1-11 9-20 10-31z" fill="url(#gBlue)" stroke="#000" stroke-width="2"/>' + TRI],
 ['Check', '<path d="M5 24c3-3 6-1 8 6C20 18 31 10 44 5 30 15 21 28 15 42h-2C11 35 9 28 5 24z"/>' + TRI],
 ['Cage', '<path d="M5 14l8-6h16v22H13l-8-4z" fill="#ddd" stroke="#000" stroke-width="2"/>']
];
$('sideTools').innerHTML = side.map(([n, s]) => `<button aria-label="${n}" class="flex size-[60px] items-center justify-center"><svg viewBox="0 0 48 48" class="size-12">${s}</svg></button>`).join('');

/* Object snaps */
const snaps = ['End', 'Near', 'Point', 'Midpoint', 'Center', 'Intersection', 'Perpendicular', 'Tangent', 'Quadrant', 'Knot', 'Vertex', 'On curve', 'On surface', 'On polysurface', 'On mesh', 'Project', 'SmartTrack'];
const check = (t, cls) => {
  const off = t.startsWith('On '), on = t === 'SmartTrack';
  return `<label class="${cls}"><span class="relative size-6"><input type="checkbox" ${on ? 'checked' : ''} ${off ? 'disabled' : ''} class="block size-6 appearance-none rounded-[5px] border border-[#cfced4] bg-white shadow-[inset_0_1px_2px_rgba(0,0,0,0.12)] disabled:bg-[#f3f2f7]">${on ? '<svg viewBox="0 0 24 24" class="pointer-events-none absolute inset-0 size-6 fill-none stroke-[#222] stroke-3"><path d="M5 12l5 6 9-12"/></svg>' : ''}</span><span class="${off ? 'text-[#b6b4bb]' : 'text-[#262529]'}">${t}</span></label>`;
};
$('osnap').innerHTML = ['Persistent', 'One shot'].map((t, i) => `<label class="flex h-[30px] items-center gap-2 pl-7 whitespace-nowrap"><input type="radio" name="mode" ${i ? '' : 'checked'} class="size-6 appearance-none rounded-full border border-[#cfced4] bg-white shadow-[inset_0_1px_2px_rgba(0,0,0,0.12)] checked:bg-[radial-gradient(circle,#222_0_4px,#fff_5px)]">${t}</label>`).join('')
 + '<div class="h-1.5"></div>' + snaps.map(t => check(t, 'flex h-10 items-center gap-2 whitespace-nowrap pl-8')).join('')
 + '<div class="h-9"></div>' + check('Disable all', 'flex h-10 items-center gap-2 whitespace-nowrap pl-8');

/* Construction plane, seen in two-point perspective */
const O = [795, 1420], A = [-4998, -170], B = [3777, -208], wa = 0.0412, wb = 0.0734;
const proj = (u, v) => { const w = 1 + u * wa + v * wb; return [(O[0] + u * wa * A[0] + v * wb * B[0]) / w, (O[1] + u * wa * A[1] + v * wb * B[1]) / w]; };
const clip = (fixed, w) => Math.max(-14, (0.08 - 1 - fixed) / w);
let minor = '', major = '';
for (let k = -70; k <= 70; k++) {
  const c = k / 5;
  const seg = (a, b) => { const s = `M${a[0].toFixed(1)} ${a[1].toFixed(1)}L${b[0].toFixed(1)} ${b[1].toFixed(1)}`; if (k % 5) minor += s; else major += s; };
  const u0 = clip(c * wb, wa), v0 = clip(c * wa, wb);
  if (u0 < 14) seg(proj(u0, c), proj(14, c));
  if (v0 < 14) seg(proj(c, v0), proj(c, 14));
}
$('ground').innerHTML = `<path d="${minor}" stroke="#9297a0" stroke-width="1"/><path d="${major}" stroke="#83878f" stroke-width="1.500"/>`;

/* Grasshopper tabs */
const gh = ['Params', 'Maths', 'Sets', 'Vector', 'Curve', 'Surface', 'Mesh', 'Intersect', 'Transform', 'Display', 'Squid (ShapeDiver edition)', 'PanelingTools', 'Kangaroo2', 'Human', 'ShapeDiver'];
$('ghTabs').innerHTML = gh.map((t, i) => i === 0
  ? `<button class="shrink-0 rounded-t-[14px] border-2 border-b-0 border-[#9a9a9a] bg-linear-to-b from-white to-[#ececec] px-[9px] pb-1.5 text-[#222]">${t}</button>`
  : `<button class="shrink-0 px-3 pt-1">${t}</button>`).join('');

/* Grasshopper ribbon */
const hex = s => `<svg viewBox="0 0 48 42" class="h-[42px] w-12"><path d="M1 21L12 1h24l11 20-11 20H12z" fill="url(#gHex)" stroke="#000" stroke-width="1.500"/><path d="M4 21L13.500 3.500h21L44 21" fill="none" stroke="#777" stroke-width="1"/><g fill="none" stroke="#fff" stroke-width="2.500">${s}</g></svg>`;
const tile = (s, bg) => `<svg viewBox="0 0 48 48" class="size-12"><rect x="1.500" y="1.500" width="45" height="45" rx="4" fill="${bg}" stroke="#000" stroke-width="2.500"/>${s}</svg>`;
const pic = s => `<svg viewBox="0 0 48 48" class="size-12">${s}</svg>`;
const ln = s => pic(`<g fill="none" stroke="#1a1a1a" stroke-width="2">${s}</g>`);
const green = () => { let r = ''; const c = ['#fbffd8', '#a8e05a', '#4cae30', '#8ef04a', '#b6f060', '#d8ff90', '#2c7018', '#74e03c', '#56c030', '#1e4a10', '#66e8a0', '#3f9a28', '#9cf05c', '#143808', '#48d060', '#80ffc0']; for (let i = 0; i < 16; i++) r += `<rect x="${3 + (i % 4) * 10.500}" y="${3 + (i >> 2) * 10.500}" width="10.500" height="10.500" fill="${c[i]}"/>`; return r; };
const ribbon = [
 ['Geometry', [[[hex('<path d="M18 13l12 16M30 13L18 29" stroke-width="5"/>'), hex('<path d="M15 32l13-17" stroke-width="5"/><path d="M36 10l-2 16-13-11z" fill="#fff" stroke="none"/>')]],
  [[hex('<ellipse cx="24" cy="21" rx="13" ry="11" stroke-width="3.500"/>'), hex('<path d="M13 10C26 14 32 22 32 34M11 18l5-8M26 34h12" stroke-width="3"/>')],
   [hex('<ellipse cx="24" cy="21" rx="15" ry="8" transform="rotate(-40 24 21)"/><ellipse cx="23" cy="22" rx="9" ry="4" transform="rotate(-40 23 22)"/>'), hex('<path d="M17 30L31 14"/><path d="M12 27h7v7h-7zM29 10h7v7h-7z" fill="#222"/>')],
   [hex('<path d="M11 17l20-9 9 12-26 13z" fill="#999"/><path d="M14 26l10-9 8 4" stroke-width="1.500"/>'), hex('<path d="M24 10l10 11-10 11-10-11z"/><path d="M11 24.500L28 6M20 6l17 18.500M11 17.500L28 36M20 36l17-18.500" stroke-width="1.200" stroke="#bbb"/>')]],
  [[hex('<path d="M12 14l10-6 12 5v18l-10 4-12-5z" fill="#aaa" stroke-width="1.500"/><path d="M12 14l12 4 10-5M24 18v17" stroke-width="1.500"/>'), hex('<path d="M11 24l9-15 14 4v13L22 35l-10-3z" fill="#aaa" stroke-width="1.500"/><ellipse cx="30" cy="13" rx="6" ry="5" fill="#444" stroke-width="1.500"/>')],
   [hex('<path d="M14 9v24M24 9v24M34 9v24M11 12h26M11 21h26M11 30h26M14 12l20 18M34 12L14 30M14 21l10-9M24 30l10-9" stroke-width="1.200"/>'), hex('<path d="M18 10l15-2v27l-21-7c5-3 6-8 6-18z" fill="#999" stroke-width="1.500"/><path d="M25 9v22M16 22h17" stroke-width="1.200"/>')]]]],
 ['Primitive', [[[hex('<ellipse cx="24" cy="21" rx="12" ry="11"/><path d="M33 13A12 11 0 1 0 15 29z" fill="#fff"/>'), hex('<path d="M15 11h18L23 32M15 10v5" stroke-width="4"/>')],
   [hex('<text x="24" y="31" text-anchor="middle" font-family="Liberation Serif" font-size="28" fill="#ddd" stroke="#ddd" stroke-width=".7">0.1</text>'), hex('<text x="24" y="32" text-anchor="middle" font-family="Liberation Serif" font-weight="bold" font-size="34" fill="#fff" stroke="none">A</text>')]]]],
 ['Input', [[[tile('<path d="M24 12v14" stroke="#000" stroke-width="5"/><path d="M16 23h16l-8 9z"/><path d="M6 36h36M8 36v6M14 36v6M20 36v6M26 36v6M32 36v6M38 36v6" stroke="#000" stroke-width="2.500"/>', 'url(#gMetal)'), tile('<path d="M7 37c4-12 7-10 6-2 4-12 8-10 7-2 4-14 8-14 6 0 2 5 6-8 13-22" fill="none" stroke="#9c5a12" stroke-width="3.500"/>', '#fbd04c')]],
  [[tile('<path d="M14 7h20v34H14z"/><path d="M17 10h14v14H17z" fill="#ddd"/>', 'url(#gMetal)'), pic('<circle cx="24" cy="24" r="22" fill="#8c8c8c" stroke="#222" stroke-width="3"/><circle cx="24" cy="24" r="15" fill="#333" stroke="#000" stroke-width="2"/><path d="M34 17l12 7-12 7z" fill="#222"/>')],
   [tile('<text x="24" y="20" text-anchor="middle" font-family="Liberation Sans" font-style="italic" font-weight="bold" font-size="24" fill="#858585">4</text><text x="24" y="46" text-anchor="middle" font-family="Liberation Sans" font-style="italic" font-weight="bold" font-size="32" fill="#222">5</text>', 'url(#gDigit)'), tile('<path d="M6 8h36v8H6zM6 21h36v8H6zM6 34h36v8H6z" fill="#ddd" stroke="#222" stroke-width="2"/>', '#777')]],
  [[tile('<path d="M2 31h44" stroke="#5c1038" stroke-width="2"/><circle cx="33" cy="32" r="4" fill="#fff" stroke="#000" stroke-width="2"/><circle cx="5" cy="32" r="4" fill="#fff" stroke="#000" stroke-width="2"/>', 'url(#gPink)'), tile(green(), '#3a8a20')]]]],
 ['Util', [[[pic('<path d="M28 8C20 18 15 24 14 32M30 8c4 10 5 18 4 28" fill="none" stroke="#6b3a20" stroke-width="2.500"/><path d="M10 17C12 6 20 3 31 3c-2 10-10 14-21 14z" fill="#66a82c"/><circle cx="13" cy="34" r="9" fill="#c8201a"/><circle cx="33" cy="38" r="9" fill="#c8201a"/><circle cx="10" cy="31" r="2.500" fill="#f29a90"/><circle cx="30" cy="35" r="2.500" fill="#f29a90"/>'), tile('<path d="M2 42h44v4H2z"/><path d="M24 42V22M24 32l-9-9M24 30l10-9M15 23l-5-3M34 21l5-5M24 24l-5-12M24 24l6-12" stroke="#000" stroke-width="3"/><path d="M8 18l3-5M13 20l2-9M20 15l-4-7M25 14l0-8M31 14l5-7M36 19l5 0M10 24l-3 1M39 24l-5 1M20 20l8-4M28 22l4-6" stroke="#000" stroke-width="2.500"/>', '#bdbdbd')]],
  [[pic('<path d="M4 16h18V7l20 17-20 17v-9H4z" fill="#4a4a4a" stroke="#222" stroke-width="2"/><path d="M6 18h18v-6" fill="none" stroke="#aaa"/>'), pic('<path d="M4 16h18V7l20 17-20 17v-9H4z" fill="#d6d6d6" stroke="#666" stroke-width="2"/>')]],
  [[pic('<ellipse cx="19" cy="20" rx="15" ry="16" fill="#c2c2c2" stroke="#888"/><ellipse cx="16" cy="20" rx="6" ry="8" fill="#666"/><ellipse cx="32" cy="30" rx="12" ry="14" fill="#d8407e" stroke="#962050"/><ellipse cx="30" cy="30" rx="6" ry="7" fill="#7c1844"/>'), pic('<path d="M20 5h8v13l11 19c2 4 0 7-4 7H13c-4 0-6-3-4-7l11-19z" fill="#f5e6ee" stroke="#7c4a62" stroke-width="2"/><path d="M15 27h18l6 11c1 4 0 5-4 5H13c-4 0-5-1-4-5z" fill="#cc2f74"/>')]]]],
 ['OpenNest', [[[pic('<path d="M6 14c4-6 10-3 16-1 1 6-4 10-9 9-6 0-8-4-7-8zM27 8c3-6 10-6 14-2 3 6-2 9-8 10-5 0-8-3-6-8zM4 44c-1-6 4-10 8-19l10 1c-1 8-7 14-8 18zM28 22l5 2c5 6 8 12 7 19-7 2-9-2-11-9z"/>'), ln('<path d="M5 42C7 22 20 8 40 6M16 42c2-14 10-21 24-22M28 42c1-6 5-9 12-11"/>')]],
  [[ln('<path d="M8 4l32 8-2 10-4-1-1-4-7-1-5 27-8-2 6-28-7-1-3 4-4-1z"/>'), '']],
  [[ln('<path d="M6 10c0-8 10-8 12 2l24 16c2 8-2 14-8 12l-4-1 1 7L8 30zM18 12c0 8-6 10-12-2M30 39l-18-14"/>'), '']],
  [[ln('<path d="M14 10h30L34 42H4zM13 16h30M7 36h28" stroke="#444"/>'), ln('<circle cx="14" cy="13" r="9"/><circle cx="36" cy="13" r="9"/><circle cx="14" cy="36" r="9"/><circle cx="36" cy="36" r="9"/>')],
   [ln('<path d="M5 21L17 3h26l-2 26-11 16H5zM5 21h25L43 3M30 21v24M17 3v18M5 45l7-14h8v14M8 36h8v8"/>'), ln('<path d="M8 6l30 7 6 8-4 24-24-8L6 30zM8 6l14 13 22 2M22 19l-4 18"/><path d="M28 26h1M36 28h1M27 35h1M35 37h1M12 16h1M13 26h1M22 10h1" stroke-width="4"/>')],
   [ln('<path d="M6 14l16-10 18 6 4 20-12 15-20-3L4 24zM17 18h15v12h-7v-5h-3v8h-5z"/>'), ln('<path d="M4 24c6 8 10 6 14 4l-1-7 9 7 5-10 8-13 5-1v32H34L22 46l-10-4zM22 46v-10"/><path d="M20 33h3" stroke-width="4"/>')]],
  [[ln('<path d="M14 5h30L32 30H4zM4 30v15h28l12-15M32 30v15M44 5v25" stroke="#666"/><path d="M19 8l3 5 4-5M22 13l-2 6M28 18l8 9M36 18l-8 9" stroke-width="2.500"/>'), ln('<path d="M5 26L27 4l16 16-6 6-8-8M27 4l-6 20 10 10 9 14V28M5 26l14 14 14-14"/>')]]]]
];
const cell = s => `<span class="flex size-14 items-center justify-center">${s}</span>`;
$('ribbon').innerHTML = ribbon.map(([name, groups]) => `<section class="shrink-0 overflow-hidden rounded-[10px] border-2 border-[#929292] bg-linear-to-b from-[#d6d6d6] to-[#f0f0f0]">
 <div class="flex h-[114px] items-center px-0.5">${groups.map(g => `<div class="flex">${g.map(c => `<div class="flex flex-col">${c.map(cell).join('')}</div>`).join('')}</div>`).join('<i class="mx-[9px] h-[100px] w-0.5 bg-linear-to-b from-transparent via-[#bdbdbd] to-transparent"></i>')}</div>
 <div class="flex h-7 items-center bg-linear-to-b from-[#3a3a3a] to-[#222] pr-1.5 pb-1 text-[20px] text-[#dcdcdc]"><span class="flex-1 text-center">${name}</span><svg viewBox="0 0 14 14" class="size-3.5 shrink-0"><path d="M7 0v13M1 7h12" stroke="#aaa" stroke-width="2"/><path d="M3 8h8l-4 5z" fill="#aaa"/></svg></div></section>`).join('');

/* Canvas objects */
const ports = [[1779, 739], [2207, 739]];
let nodes = `<div class="absolute flex items-center justify-center rounded-[10px] border-3 border-[#2e2e2e] bg-[#fff584] pr-6 pt-0.5 font-['Liberation_Mono','Courier_New',monospace] text-[21px] text-[#1e1e0a] shadow-[0_-2px_0_2px_rgba(255,255,255,0.6),inset_0_2px_0_1px_#fffde0]" style="left:1778px;top:677px;width:429px;height:126px">Base rectangle</div>`;
const slider = (id, label, x, y, w, lw, r0, r1, val, vx) => {
  ports.push([x + w, y + 28]);
  let t = ''; const n = r1 - r0;
  for (let i = 0; i <= 10; i++) t += `M${(1 + i * (n - 2) / 10).toFixed(1)} ${i % 5 ? 7 : 1}V16`;
  nodes += `<div class="absolute flex overflow-hidden rounded-[9px] border-3 border-[#3a3a3a] bg-linear-to-b from-white via-[#e4e4e4] to-[#d4d4d4] text-[26px] leading-[54px] text-black shadow-[0_-1px_0_2px_rgba(255,255,255,0.65)]" style="left:${x}px;top:${y}px;width:${w}px;height:56px">
   <label for="${id}" class="shrink-0 border-r-2 border-[#333] bg-linear-to-b from-[#e6e5ec] from-25% via-[#b4b2c0] via-30% to-[#a5a3b1] pr-1 text-center whitespace-nowrap" style="width:${lw}px">${label}</label></div>
   <svg class="absolute h-[17px] fill-none stroke-[#b8b8b8] stroke-2" style="left:${r0}px;top:${y + 14}px;width:${n}px"><path d="M0 16H${n}${t}"/></svg>
   <output for="${id}" class="absolute text-[26px] leading-8 text-black" style="left:${vx}px;top:${y + 15}px">${val}</output>
   <input id="${id}" type="range" min="0" max="10" step="0.001" value="${val}" class="absolute h-5 appearance-none bg-transparent [&::-webkit-slider-thumb]:size-5 [&::-webkit-slider-thumb]:appearance-none [&::-webkit-slider-thumb]:rounded-full [&::-webkit-slider-thumb]:border-5 [&::-webkit-slider-thumb]:border-black [&::-webkit-slider-thumb]:bg-white" style="left:${r0 - 10}px;top:${y + 18}px;width:${n + 20}px">`;
};
slider('xsize', 'X Size', 1797, 897, 608, 106, 1929, 2377, '6.045', 2109);
slider('ysize', 'Y Size', 1813, 1032, 422, 103, 1943, 2209, '5.000', 1985);
slider('radius', 'Radius', 1808, 1169, 427, 110, 1945, 2209, '1.195', 1992);
slider('factor', 'Factor', 2121, 1366, 427, 105, 2253, 2521, '0.514', 2282);
const comp = (name, x, y, w, h, ins, outs) => {
  ins.forEach(p => ports.push([x, p[1]])); outs.forEach(p => ports.push([x + w, p[1]]));
  const lab = (p, right) => `<span class="${right ? 'absolute right-5 text-[24px] leading-8' : 'absolute left-2 text-[24px] leading-8'}" style="top:${p[1] - y - 16}px">${p[0]}</span>`;
  nodes += `<div class="absolute rounded-[9px] border-3 border-[#333] bg-linear-to-b from-[#eae9ef] from-5% via-[#b4b2c0] via-28% to-[#9f9dab] text-black shadow-[0_-1px_0_2px_rgba(255,255,255,0.65)]" style="left:${x}px;top:${y}px;width:${w}px;height:${h}px">${ins.map(p => lab(p, false)).join('')}${outs.map(p => lab(p, true)).join('')}
   <div class="absolute inset-y-0.5 left-[34px] flex w-[66px] items-center justify-center rounded-[9px] border-3 border-black bg-linear-to-b from-[#a8a8a8] via-[#5a5a5a] via-22% to-[#404040] shadow-[0_0_0_1px_rgba(255,255,255,0.6)]"><span class="rotate-180 text-[32px] leading-8 font-bold text-white [writing-mode:vertical-rl]">${name}</span></div></div>`;
};
comp('Rectangle', 2542, 914, 147, 223, [['P', 947], ['X', 999], ['Y', 1052], ['R', 1105]], [['R', 973], ['L', 1078]]);
comp('Extr', 3063, 951, 149, 117, [['B', 983], ['D', 1036]], [['E', 1010]]);
comp('Cap', 3384, 898, 147, 88, [['B', 942]], [['B', 942]]);
comp('Z', 2723, 1351, 147, 75, [['F', 1389]], [['V', 1389]]);
$('nodes').innerHTML = nodes;
$('ports').innerHTML = ports.map(([x, y]) => `<circle cx="${x}" cy="${y}" r="10"/>`).join('');
</script>
</body>
</html>
